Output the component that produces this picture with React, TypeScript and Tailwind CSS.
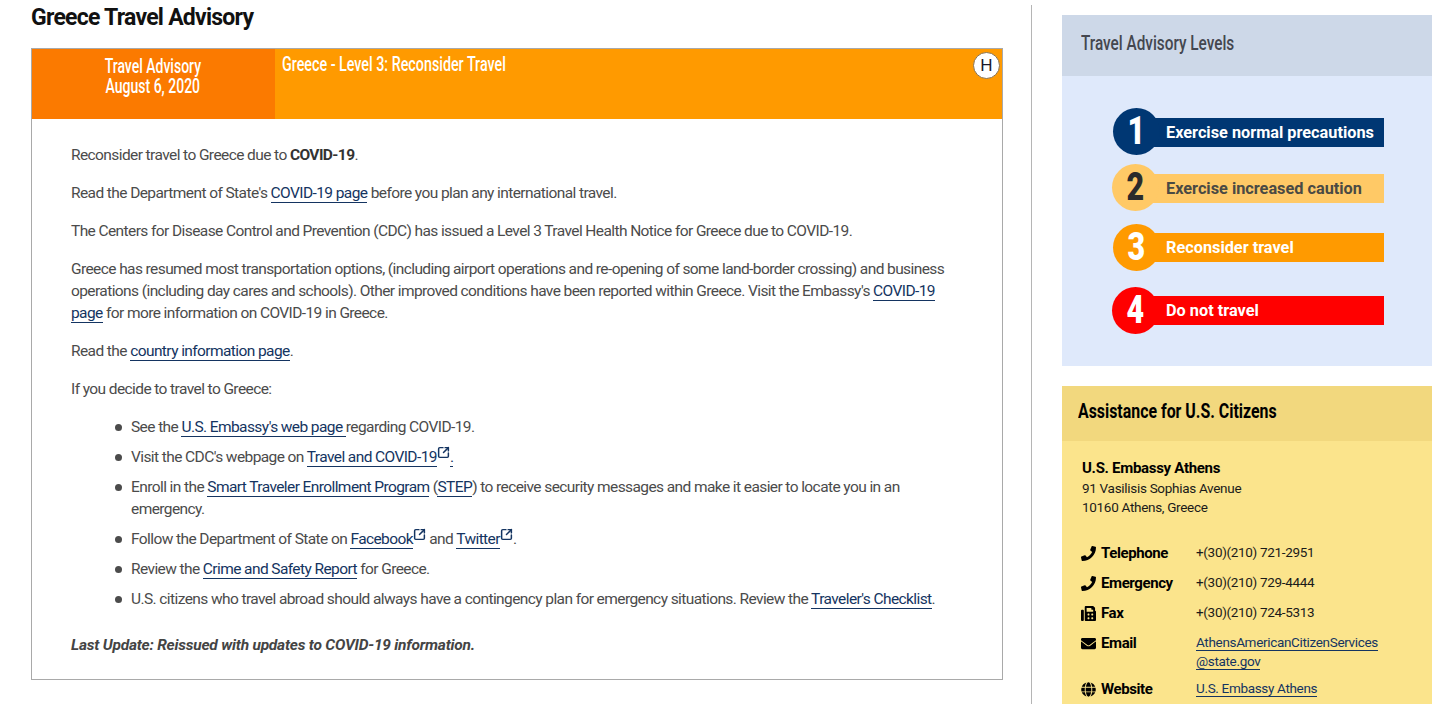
import { SquareArrowOutUpRight } from "lucide-react";
import { FaPhone, FaFax, FaEnvelope, FaGlobe } from "react-icons/fa";
import type { ReactNode } from "react";

function A({ children }: { children: ReactNode }) {
  return <a className="text-[#143461] border-b border-[#143461]">{children}</a>;
}

function Ext() {
  return <SquareArrowOutUpRight className="inline-block w-[13px] h-[13px] -mt-[10px] text-[#143461]" strokeWidth={2.75} />;
}

const bullet = "relative mb-2 before:absolute before:-left-[16px] before:top-[8px] before:w-[7px] before:h-[7px] before:rounded-full before:bg-[#4b4b4b]";

const levels = [
  { num: "1", text: "Exercise normal precautions", bg: "bg-[#003773]", numColor: "text-white", textColor: "text-white", mt: "mt-8", ml: "ml-[51px]", pl: "pl-[31px]", bar: "mt-[2px] pt-[2px]" },
  { num: "2", text: "Exercise increased caution", bg: "bg-[#ffc966]", numColor: "text-[#2b2b2b]", textColor: "text-[#4a4a44]", mt: "mt-[9px]", ml: "ml-[50px]", pl: "pl-[32px]", bar: "mt-[2px] pt-[2px]" },
  { num: "3", text: "Reconsider travel", bg: "bg-[#ff9a00]", numColor: "text-white", textColor: "text-white", mt: "mt-[13px]", ml: "ml-[51px]", pl: "pl-[31px]", bar: "pt-[2px]" },
  { num: "4", text: "Do not travel", bg: "bg-[#ff0000]", numColor: "text-white", textColor: "text-white", mt: "mt-[16px]", ml: "ml-[50px]", pl: "pl-[32px]", bar: "pt-[2px]" },
];

function Contact({ icon, label, mb = "mb-[10px]", children }: { icon: ReactNode; label: string; mb?: string; children: ReactNode }) {
  return (
    <div className={`flex ${mb}`}>
      <div className="w-[134px] shrink-0 flex items-center h-[19px] mt-px gap-[5px] pl-[19px] text-[15px] tracking-[-0.4px] font-bold text-black">
        <span className="w-[15px] flex justify-center">{icon}</span>
        <span>{label}</span>
      </div>
      <div className="text-[13.5px] tracking-[-0.33px] leading-[19px] text-[#1a1a1a]">{children}</div>
    </div>
  );
}

export default function App() {
  return (
    <div className="h-[704px] overflow-hidden bg-white flex font-['Roboto',sans-serif]">
      <main className="w-[1031px] shrink-0 pl-[31px] pr-7">
        <h1 className="text-[23px] tracking-[-0.75px] leading-[34px] font-bold text-[#111] pt-px mb-[13px]">Greece Travel Advisory</h1>
        <div className="border border-[#a9a9a9]">
          <div className="flex h-[70px] bg-[#ff9a00]">
            <div className="w-[243px] bg-[#fb7a00] text-white text-center text-[20px] font-medium leading-[20px] pt-[7px] pr-[2px]">
              <span className="inline-block scale-x-[0.7] whitespace-nowrap">
                Travel Advisory
                <br />
                August 6, 2020
              </span>
            </div>
            <div className="flex-1 text-white text-[20px] font-medium leading-[21px] pl-[7px] pt-[5px]">
              <span className="inline-block origin-left scale-x-[0.715] whitespace-nowrap">Greece - Level 3: Reconsider Travel</span>
            </div>
            <div className="relative">
              <span className="absolute right-[2px] top-[3px] w-[27px] h-[27px] rounded-full bg-white border border-[#8a7350] flex items-center justify-center text-[17px] text-[#1a1a2a] font-['Liberation_Sans',sans-serif]">
                H
              </span>
            </div>
          </div>
          <div className="px-[39px] pt-[25px] pb-[23px] text-[15.5px] tracking-[-0.59px] leading-[22px] text-[#4b4b4b]">
            <p className="mb-4">
              Reconsider travel to Greece due to <b className="text-[#333]">COVID-19</b>.
            </p>
            <p className="mb-4">
              Read the Department of State's <A>COVID-19 page</A> before you plan any international travel.
            </p>
            <p className="mb-4">
              The Centers for Disease Control and Prevention (CDC) has issued a Level 3 Travel Health Notice for Greece due to COVID-19.
            </p>
            <p className="mb-4">
              Greece has resumed most transportation options, (including airport operations and re-opening of some land-border crossing) and business operations (including day cares and schools). Other improved conditions have been reported within Greece. Visit the Embassy's <A>COVID-19 page</A> for more information on COVID-19 in Greece.
            </p>
            <p className="mb-4">
              Read the <A>country information page</A>.
            </p>
            <p className="mb-4">If you decide to travel to Greece:</p>
            <ul className="pl-[60px] mb-6">
              <li className={bullet}>
                See the <A>U.S. Embassy's web page </A>regarding COVID-19.
              </li>
              <li className={bullet}>
                Visit the CDC's webpage on <A>Travel and COVID-19</A>
                <Ext />
                <A>.</A>
              </li>
              <li className={bullet}>
                Enroll in the <A>Smart Traveler Enrollment Program</A> (<A>STEP</A>) to receive security messages and make it easier to locate you in an emergency.
              </li>
              <li className={bullet}>
                Follow the Department of State on <A>Facebook</A>
                <Ext /> and <A>Twitter</A>
                <Ext />.
              </li>
              <li className={bullet}>
                Review the <A>Crime and Safety Report</A> for Greece.
              </li>
              <li className={`${bullet} mb-0`}>
                U.S. citizens who travel abroad should always have a contingency plan for emergency situations. Review the <A>Traveler's Checklist</A>.
              </li>
            </ul>
            <p className="font-bold italic tracking-[-0.22px] text-[#444]">Last Update: Reissued with updates to COVID-19 information.</p>
          </div>
        </div>
      </main>

      <div className="w-px bg-[#b5b5b5] mt-[5px]" />

      <aside className="flex-1 pl-[30px] pt-[15px]">
        <div className="bg-[#dfe9fb] h-[351px]">
          <h2 className="bg-[#cdd8e8] h-[61px] flex items-center pl-[19px] pb-[3px] text-[21px] font-medium text-[#44474f]">
            <span className="inline-block origin-left scale-x-[0.73] whitespace-nowrap">Travel Advisory Levels</span>
          </h2>
          {levels.map((l) => (
            <div key={l.num} className={`flex items-center w-[322px] h-[47px] ${l.mt}`}>
              <div className={`relative z-10 w-[47px] h-[47px] rounded-full shrink-0 flex items-center justify-center text-[39px] font-black ${l.ml} ${l.bg} ${l.numColor}`}>
                <span className="inline-block scale-x-[0.78]">{l.num}</span>
              </div>
              <div className={`flex-1 h-[29px] -ml-[25px] flex items-center text-[16.3px] font-bold ${l.pl} ${l.bar} ${l.bg} ${l.textColor}`}>
                {l.text}
              </div>
            </div>
          ))}
        </div>

        <div className="bg-[#fbe48c] mt-5 h-[400px]">
          <h2 className="bg-[#f2d87e] h-[55px] flex items-center pl-4 pb-[4px] text-[20.5px] font-bold text-black">
            <span className="inline-block origin-left scale-x-[0.775] whitespace-nowrap">Assistance for U.S. Citizens</span>
          </h2>
          <div className="pl-5 pt-4 text-[13.5px] tracking-[-0.3px] leading-[19px] text-[#1a1a1a] mb-[26px]">
            <div className="text-[15px] tracking-[-0.3px] leading-[22px] font-bold text-black">U.S. Embassy Athens</div>
            91 Vasilisis Sophias Avenue
            <br />
            10160 Athens, Greece
          </div>
          <Contact icon={<FaPhone className="w-[15px] h-[15px]" />} label="Telephone">
            +(30)(210) 721-2951
          </Contact>
          <Contact icon={<FaPhone className="w-[15px] h-[15px]" />} label="Emergency">
            +(30)(210) 729-4444
          </Contact>
          <Contact icon={<FaFax className="w-[16px] h-[15px]" />} label="Fax">
            +(30)(210) 724-5313
          </Contact>
          <Contact icon={<FaEnvelope className="w-[16px] h-[15px]" />} label="Email" mb="mb-[8px]">
            <A>AthensAmericanCitizenServices</A>
            <br />
            <A>@state.gov</A>
          </Contact>
          <Contact icon={<FaGlobe className="w-[15px] h-[15px]" />} label="Website">
            <A>U.S. Embassy Athens</A>
          </Contact>
        </div>
      </aside>
    </div>
  );
}
